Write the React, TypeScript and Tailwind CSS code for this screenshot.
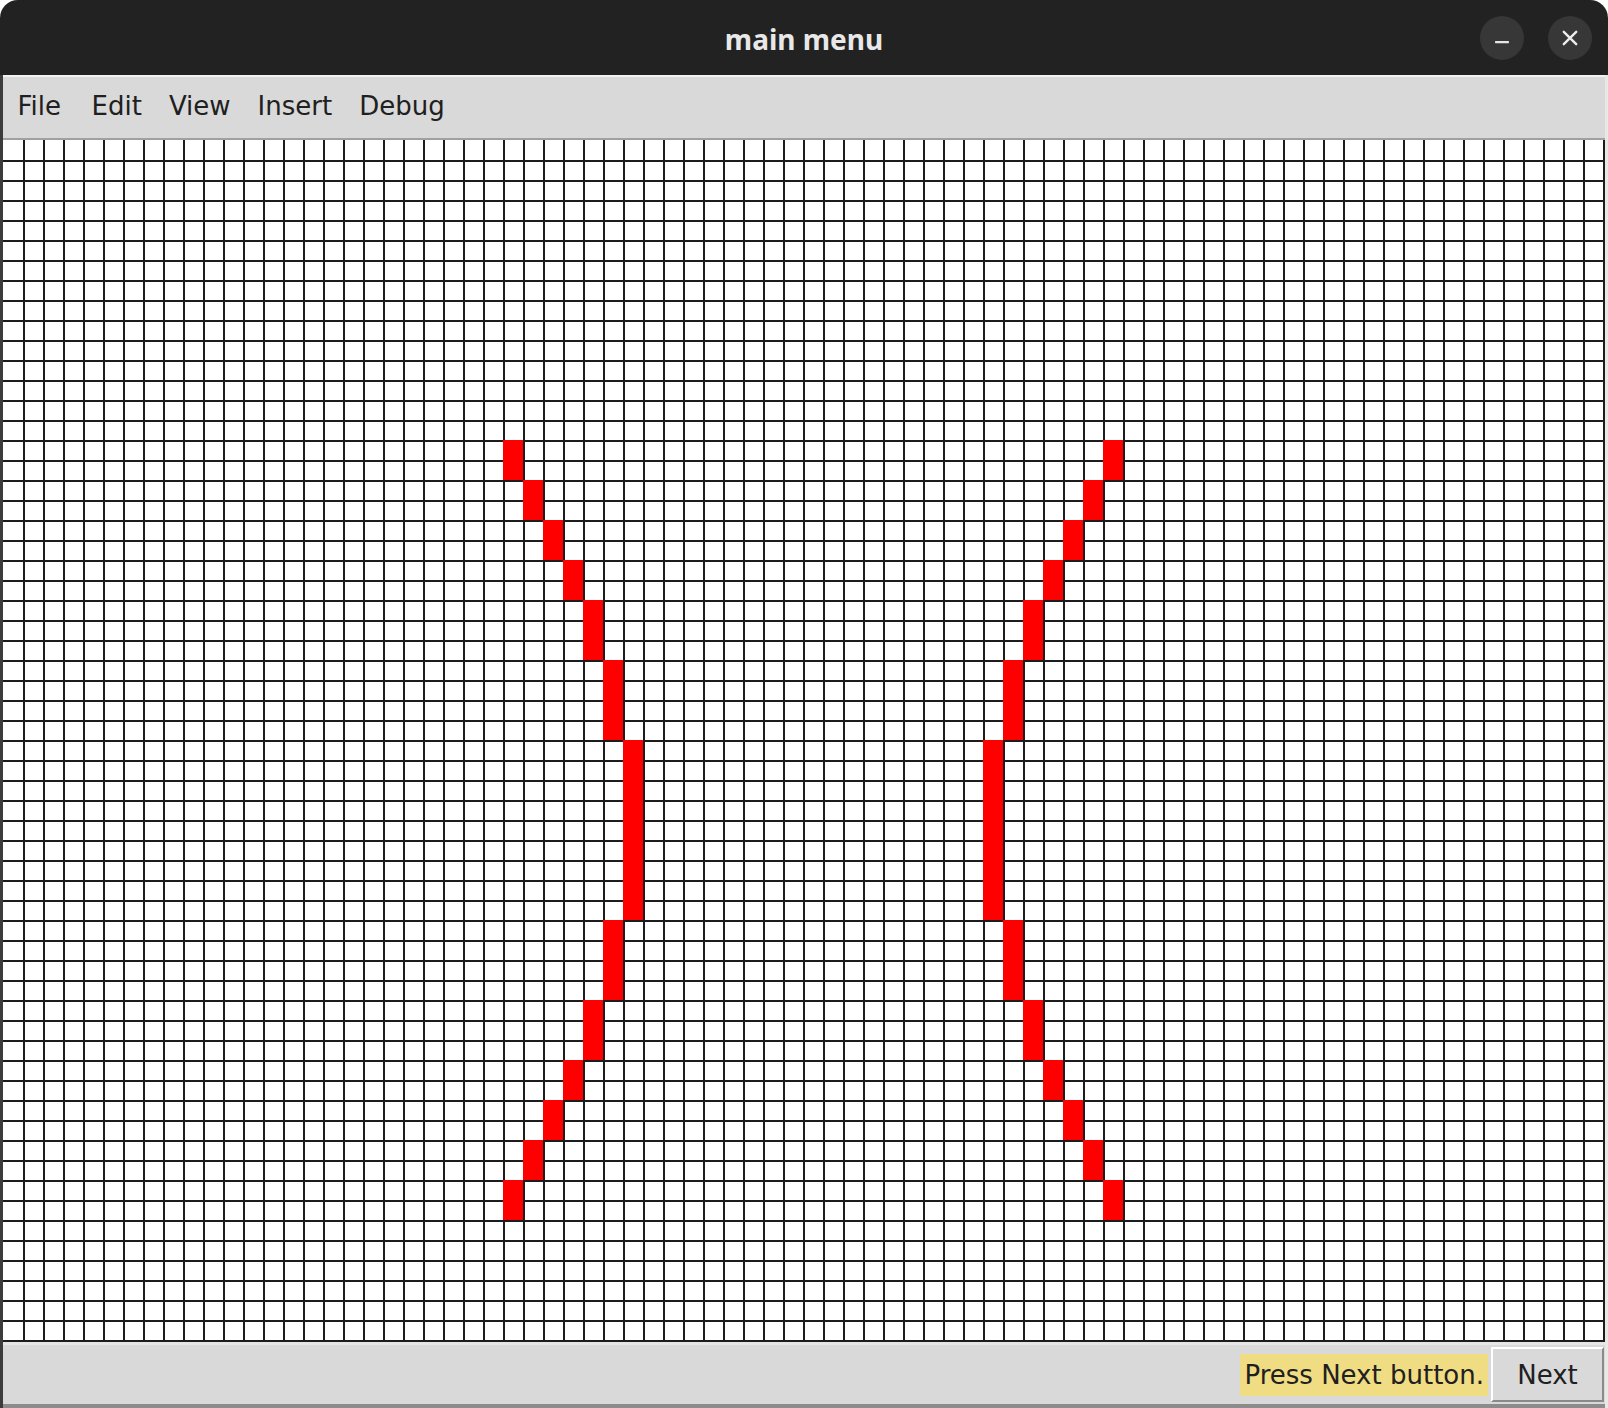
import React from "react";

// canvas geometry: 20px cells, 2px lines, first line 20px in from the edge
const CELL = 20;
const COLS = 80;
const ROWS = 60;
const CANVAS_W = 1602;
const CANVAS_H = 1202;

// [column, first row, row count] for the left stroke; the right one is mirrored
const LEFT_STROKE: [number, number, number][] = [
  [24, 14, 2],
  [25, 16, 2],
  [26, 18, 2],
  [27, 20, 2],
  [28, 22, 3],
  [29, 25, 4],
  [30, 29, 9],
  [29, 38, 4],
  [28, 42, 3],
  [27, 45, 2],
  [26, 47, 2],
  [25, 49, 2],
  [24, 51, 2],
];

const blocks = [
  ...LEFT_STROKE,
  ...LEFT_STROKE.map(([c, r, n]) => [78 - c, r, n] as [number, number, number]),
];

const menus = ["File", "Edit", "View", "Insert", "Debug"];

export default function App() {
  return (
    <div className="w-[1608px] h-[1408px] bg-white flex flex-col">
      <TitleBar />

      <div className="flex-1 flex flex-col border-l-[3px] border-l-[#3c3c3c] border-r-[3px] border-r-[#e8e8e8] font-['DejaVu_Sans',sans-serif] text-[26px] text-[#202020]">
        <div className="h-[65px] bg-[#d9d9d9] border-t-2 border-t-[#f2f2f2] border-b-2 border-b-[#a0a0a0] flex pl-[1px] pt-[14px]">
          {menus.map((m, i) => (
            <span
              key={m}
              className={i === 0 ? "pl-[13.5px] pr-[17px] leading-[30px] h-[30px]" : "px-[13.5px] leading-[30px] h-[30px]"}
            >
              {m}
            </span>
          ))}
        </div>

        <GridCanvas />

        <div className="flex-1 bg-[#d9d9d9] border-t-[3px] border-t-[#e6e6e6] border-b-4 border-b-[#8c8c8c] flex items-center justify-end pr-px">
          <div className="h-[42px] px-[4px] mr-[3px] bg-[#f0dc82] flex items-center leading-[30px]">
            Press Next button.
          </div>
          <button className="h-[55px] w-[113px] bg-[#d9d9d9] border-2 border-t-white border-l-white border-b-[#8a8a8a] border-r-[#8a8a8a] flex items-center justify-center leading-[30px]">
            Next
          </button>
        </div>
      </div>
    </div>
  );
}

function TitleBar() {
  return (
    <div className="h-[75px] bg-[#222222] rounded-t-[18px] grid grid-cols-[1fr_auto_1fr] items-center">
      <div />
      <div className="font-['Noto_Sans',sans-serif] font-bold text-[28px] leading-[38px] text-[#e8e8e8] pt-[2px]">
        main menu
      </div>
      <div className="flex justify-end items-center gap-[24px] pr-[16px] pt-px">
        <div className="w-[44px] h-[44px] rounded-full bg-[#373737] flex items-center justify-center">
          <svg width="16" height="16" viewBox="0 0 16 16">
            <rect x="1" y="11" width="14" height="2.2" rx="0.6" fill="#e6e6e6" />
          </svg>
        </div>
        <div className="w-[44px] h-[44px] rounded-full bg-[#373737] flex items-center justify-center">
          <svg width="16" height="16" viewBox="0 0 16 16">
            <path d="M1.8 1.8 L14.2 14.2 M14.2 1.8 L1.8 14.2" stroke="#ececec" strokeWidth="2.4" strokeLinecap="round" />
          </svg>
        </div>
      </div>
    </div>
  );
}

function GridCanvas() {
  return (
    <svg width={CANVAS_W} height={CANVAS_H} className="block bg-white shrink-0">
      {Array.from({ length: COLS }, (_, k) => (
        <rect key={`v${k}`} x={CELL + CELL * k} y={0} width={2} height={CANVAS_H} fill="#1c1c1c" />
      ))}
      {Array.from({ length: ROWS }, (_, j) => (
        <rect key={`h${j}`} x={0} y={CELL + CELL * j} width={CANVAS_W} height={2} fill="#1c1c1c" />
      ))}
      {blocks.map(([c, r, n], i) => (
        <rect key={i} x={CELL + CELL * c} y={CELL + CELL * r} width={CELL} height={CELL * n} fill="#ff0000" />
      ))}
    </svg>
  );
}
